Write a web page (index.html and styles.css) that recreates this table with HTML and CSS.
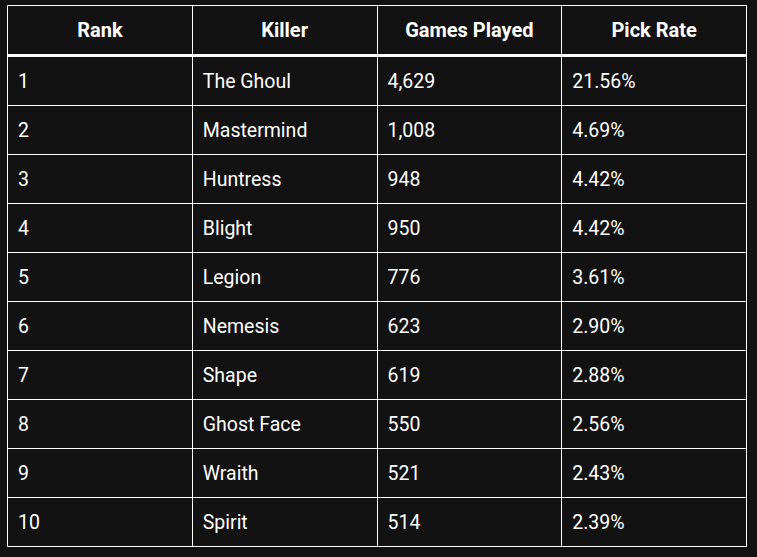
FILE: index.html
```html
<!DOCTYPE html>
<html>
<head>
<meta charset="utf-8">
<link rel="stylesheet" href="styles.css">
</head>
<body>
<div class="wrap">
<table class="stats">
<thead>
<tr><th>Rank</th><th>Killer</th><th>Games Played</th><th>Pick Rate</th></tr>
</thead>
<tbody>
<tr><td>1</td><td>The Ghoul</td><td>4,629</td><td>21.56%</td></tr>
<tr><td>2</td><td>Mastermind</td><td>1,008</td><td>4.69%</td></tr>
<tr><td>3</td><td>Huntress</td><td>948</td><td>4.42%</td></tr>
<tr><td>4</td><td>Blight</td><td>950</td><td>4.42%</td></tr>
<tr><td>5</td><td>Legion</td><td>776</td><td>3.61%</td></tr>
<tr><td>6</td><td>Nemesis</td><td>623</td><td>2.90%</td></tr>
<tr><td>7</td><td>Shape</td><td>619</td><td>2.88%</td></tr>
<tr><td>8</td><td>Ghost Face</td><td>550</td><td>2.56%</td></tr>
<tr><td>9</td><td>Wraith</td><td>521</td><td>2.43%</td></tr>
<tr><td>10</td><td>Spirit</td><td>514</td><td>2.39%</td></tr>
</tbody>
</table>
</div>
</body>
</html>
```
FILE: styles.css
```css
html, body {
  margin: 0;
  padding: 0;
  background: #121212;
}
.wrap {
  padding: 5px 0 0 7px;
}
.stats {
  border-collapse: collapse;
  width: 740px;
  table-layout: fixed;
  font-family: Roboto, "Liberation Sans", sans-serif;
  font-size: 19.5px;
  color: #ffffff;
}
.stats th, .stats td {
  border: 1px solid #ffffff;
  padding: 0 10px;
  vertical-align: middle;
}
.stats th {
  height: 50px;
  font-size: 20px;
  font-weight: bold;
  text-align: center;
  border-bottom: 3px solid #ffffff;
  box-sizing: border-box;
}
.stats td {
  height: 48px;
  text-align: left;
}
```
